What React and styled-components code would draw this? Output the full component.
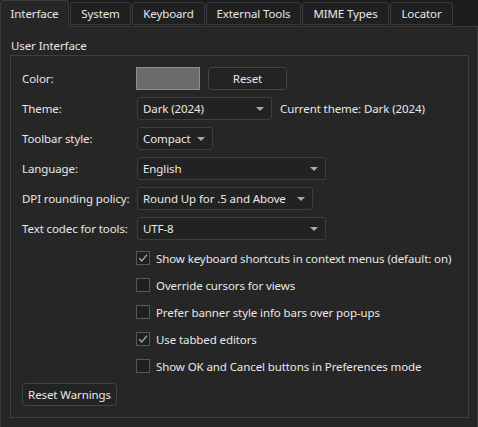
import React from "react";
import styled, { createGlobalStyle } from "styled-components";

const Global = createGlobalStyle`
  html, body {
    margin: 0;
    padding: 0;
    background: #1c1c1c;
  }
  * { box-sizing: border-box; }
`;

const Window = styled.div`
  width: 478px;
  height: 427px;
  display: flex;
  flex-direction: column;
  background: #1c1c1c;
  color: #e8e8e8;
  font-family: "Noto Sans", "Liberation Sans", sans-serif;
  font-size: 11.5px;
  letter-spacing: -0.1px;
  overflow: hidden;
`;

const TabBar = styled.div`
  display: flex;
  align-items: flex-end;
  gap: 1px;
  height: 26px;
  position: relative;
  z-index: 1;
`;

const Tab = styled.div`
  width: ${(p) => p.w}px;
  height: ${(p) => (p.active ? 27 : 23)}px;
  margin-bottom: ${(p) => (p.active ? -1 : 1)}px;
  display: flex;
  align-items: center;
  justify-content: center;
  padding-bottom: ${(p) => (p.active ? 2 : 0)}px;
  background: ${(p) => (p.active ? "#262626" : "#202020")};
  border: 1px solid #3a3a3a;
  border-bottom: ${(p) => (p.active ? "none" : "1px solid #3a3a3a")};
  border-radius: 3px 3px 0 0;
  white-space: nowrap;
`;

const Pane = styled.div`
  flex: 1;
  background: #262626;
  border: 1px solid #3a3a3a;
  margin-bottom: 1px;
  padding: 10px 8px 9px 9px;
  display: flex;
  flex-direction: column;
`;

const GroupTitle = styled.div`
  height: 18px;
  line-height: 18px;
  padding-left: 1px;
`;

const GroupFrame = styled.div`
  flex: 1;
  border: 1px solid #3e3e3e;
  padding: 11px;
  display: flex;
  flex-direction: column;
`;

const FormGrid = styled.div`
  display: grid;
  grid-template-columns: 114px auto;
  row-gap: 7px;
  align-items: center;
`;

const Label = styled.div`
  height: 23px;
  line-height: 23px;
  white-space: nowrap;
`;

const Field = styled.div`
  display: flex;
  align-items: center;
  gap: 8px;
`;

const Swatch = styled.div`
  width: 64px;
  height: 23px;
  background: #6b6b6b;
  border: 1px solid #8c8c8c;
`;

const Button = styled.div`
  width: ${(p) => p.w}px;
  height: 23px;
  display: flex;
  align-items: center;
  justify-content: center;
  background: #232323;
  border: 1px solid #444;
  border-radius: 4px;
  white-space: nowrap;
`;

const Combo = styled.div`
  width: ${(p) => p.w}px;
  height: 23px;
  margin-left: 1px;
  display: flex;
  align-items: center;
  justify-content: space-between;
  padding: 0 7px 0 5px;
  background: #222222;
  border: 1px solid #3e3e3e;
  border-radius: 3px;
  white-space: nowrap;
`;

const Arrow = styled.span`
  width: 0;
  height: 0;
  border-left: 4px solid transparent;
  border-right: 4px solid transparent;
  border-top: 4px solid #a8a8a8;
`;

const Note = styled.span`
  white-space: nowrap;
`;

const Checks = styled.div`
  margin-top: 9px;
  padding-left: 114px;
  display: flex;
  flex-direction: column;
  gap: 9px;
`;

const CheckRow = styled.div`
  height: 18px;
  display: flex;
  align-items: center;
  gap: 6px;
  white-space: nowrap;
`;

const Box = styled.span`
  width: 14px;
  height: 14px;
  border: 1px solid #575757;
  background: #1f1f1f;
  display: flex;
  align-items: center;
  justify-content: center;
`;

const Footer = styled.div`
  margin-top: 8px;
  display: flex;
`;

const Check = ({ checked, children }) => (
  <CheckRow>
    <Box>
      {checked && (
        <svg width="12" height="12" viewBox="0 0 12 12">
          <path d="M2.2 6.2 L4.8 9 L10 2.6" fill="none" stroke="#a6a6a6" strokeWidth="1.4" />
        </svg>
      )}
    </Box>
    {children}
  </CheckRow>
);

const tabs = [
  ["Interface", 69],
  ["System", 61],
  ["Keyboard", 73],
  ["External Tools", 95],
  ["MIME Types", 87],
  ["Locator", 63],
];

export default function App() {
  return (
    <>
      <Global />
      <Window>
        <TabBar>
          {tabs.map(([t, w], i) => (
            <Tab key={t} w={w} active={i === 0}>
              {t}
            </Tab>
          ))}
        </TabBar>
        <Pane>
          <GroupTitle>User Interface</GroupTitle>
          <GroupFrame>
            <FormGrid>
              <Label>Color:</Label>
              <Field>
                <Swatch />
                <Button w={79}>Reset</Button>
              </Field>
              <Label>Theme:</Label>
              <Field>
                <Combo w={135}>
                  Dark (2024)
                  <Arrow />
                </Combo>
                <Note>Current theme: Dark (2024)</Note>
              </Field>
              <Label>Toolbar style:</Label>
              <Field>
                <Combo w={76}>
                  Compact
                  <Arrow />
                </Combo>
              </Field>
              <Label>Language:</Label>
              <Field>
                <Combo w={189}>
                  English
                  <Arrow />
                </Combo>
              </Field>
              <Label>DPI rounding policy:</Label>
              <Field>
                <Combo w={176}>
                  Round Up for .5 and Above
                  <Arrow />
                </Combo>
              </Field>
              <Label>Text codec for tools:</Label>
              <Field>
                <Combo w={189}>
                  UTF-8
                  <Arrow />
                </Combo>
              </Field>
            </FormGrid>
            <Checks>
              <Check checked>Show keyboard shortcuts in context menus (default: on)</Check>
              <Check>Override cursors for views</Check>
              <Check>Prefer banner style info bars over pop-ups</Check>
              <Check checked>Use tabbed editors</Check>
              <Check>Show OK and Cancel buttons in Preferences mode</Check>
            </Checks>
            <Footer>
              <Button w={95}>Reset Warnings</Button>
            </Footer>
          </GroupFrame>
        </Pane>
      </Window>
    </>
  );
}
